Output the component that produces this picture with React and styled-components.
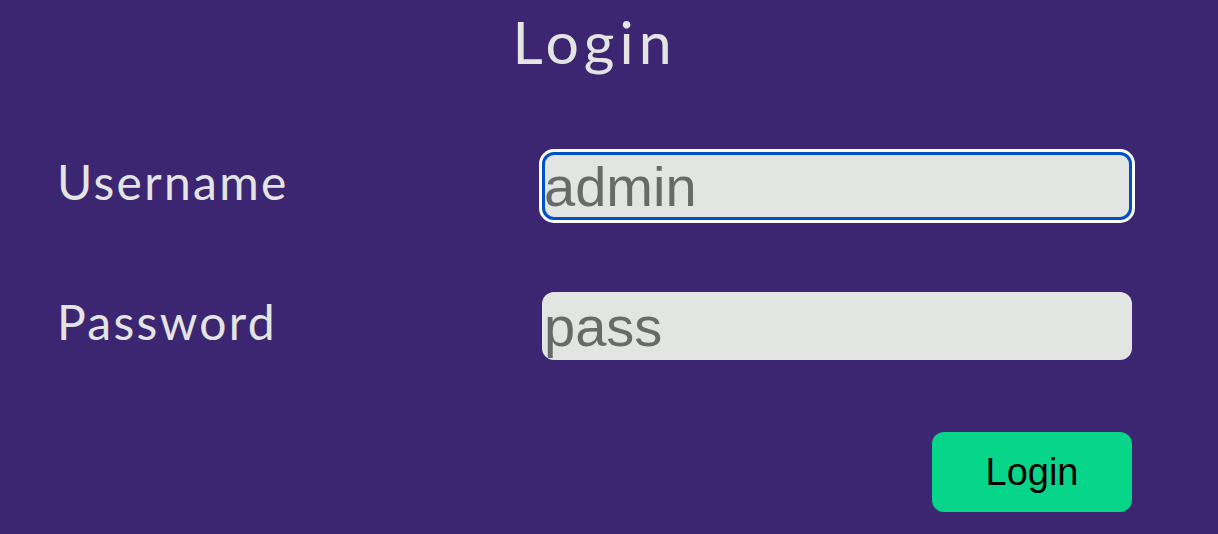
import React from 'react';
import styled, { createGlobalStyle } from 'styled-components';

const GlobalStyle = createGlobalStyle`
  html, body {
    margin: 0;
    background: #3c2672;
  }
  body {
    font-family: Lato, "Noto Sans", sans-serif;
  }
`;

const Page = styled.main`
  width: 1218px;
  height: 534px;
  box-sizing: border-box;
  padding: 0 86px 0 57px;
  overflow: hidden;
`;

const Title = styled.h1`
  margin: 0;
  padding-top: 7px;
  text-align: center;
  font-size: 59px;
  font-weight: 400;
  line-height: 70px;
  letter-spacing: 5px;
  color: #e3e5e2;
`;

const Form = styled.form`
  display: grid;
  grid-template-columns: 1fr 590px;
  align-items: center;
  row-gap: 72px;
  margin-top: 75px;
`;

const Label = styled.label`
  margin-bottom: 8px;
  font-size: 48px;
  line-height: 60px;
  letter-spacing: 2.3px;
  color: #e3e5e2;
`;

const Input = styled.input`
  box-sizing: border-box;
  width: 590px;
  height: 68px;
  padding: 0 2px;
  border: none;
  border-radius: 12px;
  background: #e3e5e2;
  font-family: "Liberation Sans", Arial, sans-serif;
  font-size: 56px;
  color: #333;
  outline: none;
  box-shadow: ${(p) => (p.$focused ? 'inset 0 0 0 3px #0050c8, 0 0 0 3px #ffffff' : 'none')};

  &::placeholder {
    color: #6a6a6a;
    opacity: 1;
  }
`;

const SubmitButton = styled.button`
  grid-column: 2;
  justify-self: end;
  width: 200px;
  height: 80px;
  border: none;
  border-radius: 12px;
  background: #07d68a;
  color: #000;
  font-family: "Liberation Sans", Arial, sans-serif;
  font-size: 38px;
  cursor: pointer;
`;

export default function App() {
  return (
    <>
      <GlobalStyle />
      <Page>
        <Title>Login</Title>
        <Form onSubmit={(e) => e.preventDefault()}>
          <Label htmlFor="username">Username</Label>
          <Input id="username" type="text" placeholder="admin" $focused />
          <Label htmlFor="password">Password</Label>
          <Input id="password" type="password" placeholder="pass" />
          <SubmitButton type="submit">Login</SubmitButton>
        </Form>
      </Page>
    </>
  );
}
